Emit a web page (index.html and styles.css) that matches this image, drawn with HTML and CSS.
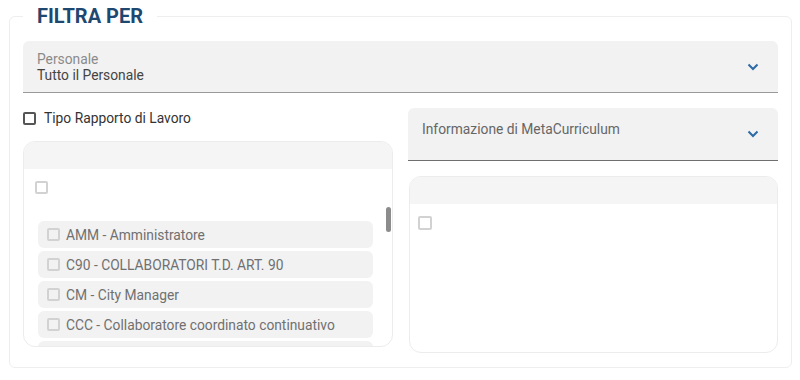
FILE: index.html
```html
<!DOCTYPE html>
<html>
<head>
    <title>Filtra per</title>
    <link rel="stylesheet" href="styles.css">
</head>
<body>
    <fieldset class="filter">
        <legend>FILTRA PER</legend>

        <!-- Personale -->
        <div class="select select-wide">
            <div class="select-text">
                <span class="select-label">Personale</span>
                <span class="select-value">Tutto il Personale</span>
            </div>
            <svg class="chevron" width="12" height="8" viewBox="0 0 12 8"><polyline points="1.5,1.5 6,6 10.5,1.5" /></svg>
        </div>

        <div class="columns">
            <!-- Tipo Rapporto di Lavoro -->
            <div class="column">
                <label class="check-row"><span class="box box-dark"></span>Tipo Rapporto di Lavoro</label>
                <div class="panel panel-left">
                    <div class="panel-head"></div>
                    <div class="panel-all"><span class="box"></span></div>
                    <div class="list">
                        <div class="item"><span class="box"></span>AMM - Amministratore</div>
                        <div class="item"><span class="box"></span>C90 - COLLABORATORI T.D. ART. 90</div>
                        <div class="item"><span class="box"></span>CM - City Manager</div>
                        <div class="item"><span class="box"></span>CCC - Collaboratore coordinato continuativo</div>
                        <div class="item"></div>
                        <div class="thumb"></div>
                    </div>
                </div>
            </div>

            <!-- MetaCurriculum -->
            <div class="column">
                <div class="select select-meta">
                    <span class="select-placeholder">Informazione di MetaCurriculum</span>
                    <svg class="chevron" width="12" height="8" viewBox="0 0 12 8"><polyline points="1.5,1.5 6,6 10.5,1.5" /></svg>
                </div>
                <div class="panel panel-right">
                    <div class="panel-head"></div>
                    <div class="panel-all"><span class="box"></span></div>
                </div>
            </div>
        </div>
    </fieldset>
</body>
</html>
```

FILE: styles.css
```css
body {
    margin: 0;
    background: #fff;
    font-family: Roboto, "Liberation Sans", Arial, sans-serif;
    font-size: 13.8px;
    color: #333;
}
.filter {
    margin: 4px 8px 0 9px;
    padding: 13px 13px 14px 13px;
    border: 1px solid #eeeeee;
    border-radius: 6px;
    min-inline-size: 0;
}
.filter legend {
    padding: 0 14px;
    font-size: 20px;
    line-height: 24px;
    font-weight: bold;
    color: #1f4870;
}
.select {
    display: flex;
    justify-content: space-between;
    background-color: #f2f2f2;
    border-radius: 6px 6px 0 0;
    box-sizing: border-box;
}
.select-wide {
    height: 52px;
    align-items: center;
    padding: 0 19px 0 14px;
    border-bottom: 1px solid #9a9a9a;
}
.select-text {
    display: flex;
    flex-direction: column;
    padding-top: 1px;
}
.select-label {
    color: #8a8a8a;
    line-height: 16.5px;
}
.select-value {
    color: #444;
    line-height: 16.5px;
}
.chevron {
    fill: none;
    stroke: #2d6aa5;
    stroke-width: 2;
}
.select-meta {
    height: 53px;
    padding: 13px 19px 0 14px;
    border-bottom: 1px solid #6f6f6f;
}
.select-placeholder {
    color: #666;
    line-height: 16px;
}
.select-meta .chevron {
    margin-top: 9px;
}
.columns {
    display: grid;
    grid-template-columns: 370px 370px;
    column-gap: 15px;
    align-items: start;
}
.column {
    padding-top: 15px;
}
.check-row {
    display: flex;
    align-items: center;
    gap: 8px;
    height: 20px;
    color: #333;
}
.box {
    display: inline-block;
    width: 13px;
    height: 13px;
    box-sizing: border-box;
    border: 2px solid #d2d2d2;
    border-radius: 2px;
    flex-shrink: 0;
}
.box-dark {
    border-color: #555;
}
.panel {
    border: 1px solid #ececec;
    border-radius: 12px;
    overflow: hidden;
    box-sizing: border-box;
}
.panel-left {
    margin-top: 13px;
    height: 206px;
}
.panel-right {
    margin-top: 15px;
    height: 177px;
    margin-left: 1px;
}
.panel-head {
    height: 27px;
    background-color: #f5f5f5;
}
.panel-left .panel-all {
    height: 36px;
    padding: 12px 0 0 11px;
    box-sizing: border-box;
}
.panel-right .panel-all {
    padding: 12px 0 0 8px;
}
.panel-right .box {
    width: 14px;
    height: 14px;
}
.list {
    position: relative;
    height: 141px;
    padding: 16px 19px 0 14px;
    box-sizing: border-box;
    overflow: hidden;
    display: flex;
    flex-direction: column;
    gap: 3px;
}
.item {
    display: flex;
    align-items: center;
    gap: 6px;
    flex-shrink: 0;
    height: 27px;
    padding-left: 9px;
    background-color: #f2f2f2;
    border-radius: 6px;
    color: #707070;
}
.thumb {
    position: absolute;
    top: 2px;
    left: 362px;
    width: 5px;
    height: 25px;
    background-color: #8c8c8c;
    border-radius: 3px;
}
```
